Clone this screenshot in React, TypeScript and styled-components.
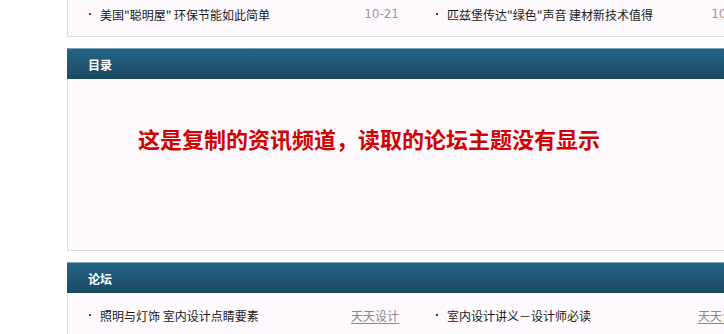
import React from "react";
import styled, { createGlobalStyle } from "styled-components";

const Global = createGlobalStyle`
  html, body { margin: 0; padding: 0; background: #ffffff; overflow: hidden; }
  body { font-family: "Noto Sans CJK SC", "DejaVu Sans", sans-serif; font-size: 12px; color: #222; }
`;

const Page = styled.div`
  width: 724px;
  height: 334px;
  overflow: hidden;
  padding-left: 67px;
  box-sizing: border-box;
`;

const Column = styled.div`
  width: 720px;
  display: flex;
  flex-direction: column;
  gap: 11px;
`;

const Panel = styled.section`
  display: flex;
  flex-direction: column;
`;

const Header = styled.div`
  border-top: 1px solid #7fa3b6;
  background: linear-gradient(to bottom, #246486 0%, #1f5573 55%, #1b4a62 100%);
  display: flex;
  align-items: center;
  justify-content: space-between;
  padding: 0 20px 0 21px;
  box-sizing: border-box;
  height: 31px;
  color: #fff;
`;

const HeaderTitle = styled.span`
  font-weight: bold;
  font-size: 12px;
`;

const More = styled.span`
  font-size: 12px;
  margin-right: -3px;
`;

const Body = styled.div<{ $h?: number }>`
  background: #fdf9fd;
  border-left: 1px solid #dcdcdc;
  border-bottom: 1px solid #dcdcdc;
  ${(p) => (p.$h ? `height: ${p.$h}px;` : "")}
  box-sizing: content-box;
`;

const List = styled.ul<{ $pt: number; $pb: number }>`
  list-style: none;
  margin: 0;
  padding: ${(p) => p.$pt}px 0 ${(p) => p.$pb}px 20px;
  display: grid;
  grid-template-columns: 347px 347px;
`;

const Item = styled.li`
  height: 24px;
  display: flex;
  align-items: center;
  padding-right: 36px;
`;

const Dot = styled.span`
  width: 2px;
  height: 2px;
  background: #9b1b3a;
  margin: 0 9px 0 1px;
  flex: none;
`;

const Title = styled.span`
  flex: 1;
  white-space: nowrap;
  color: #1a1a1a;
`;

const DateText = styled.span`
  font-family: "DejaVu Sans", sans-serif;
  color: #999;
  font-size: 12px;
`;

const Source = styled.span`
  color: #888;
  text-decoration: underline;
  text-underline-offset: 2px;
`;

const Notice = styled.div`
  padding: 44px 0 0 70px;
  color: #d40000;
  font-weight: bold;
  font-size: 22px;
  line-height: 30px;
  white-space: nowrap;
`;

export default function App() {
  return (
    <>
      <Global />
      <Page>
        <Column>
          <Panel>
            <Body>
              <List $pt={2} $pb={10}>
                <Item>
                  <Dot />
                  <Title>美国"聪明屋" 环保节能如此简单</Title>
                  <DateText>10-21</DateText>
                </Item>
                <Item>
                  <Dot />
                  <Title>匹兹堡传达"绿色"声音 建材新技术值得</Title>
                  <DateText>10-21</DateText>
                </Item>
              </List>
            </Body>
          </Panel>
          <Panel>
            <Header>
              <HeaderTitle>目录</HeaderTitle>
              <More>更多</More>
            </Header>
            <Body $h={171}>
              <Notice>这是复制的资讯频道，读取的论坛主题没有显示</Notice>
            </Body>
          </Panel>
          <Panel>
            <Header>
              <HeaderTitle>论坛</HeaderTitle>
              <More>更多</More>
            </Header>
            <Body>
              <List $pt={10} $pb={11}>
                <Item>
                  <Dot />
                  <Title>照明与灯饰 室内设计点睛要素</Title>
                  <Source>天天设计</Source>
                </Item>
                <Item>
                  <Dot />
                  <Title>室内设计讲义－设计师必读</Title>
                  <Source>天天设计</Source>
                </Item>
              </List>
            </Body>
          </Panel>
        </Column>
      </Page>
    </>
  );
}
